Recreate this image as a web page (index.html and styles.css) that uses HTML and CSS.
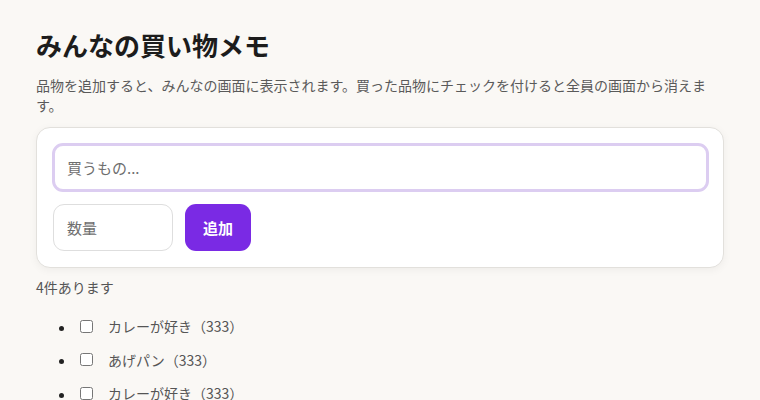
FILE: index.html
```html
<!DOCTYPE html>
<html lang="ja">
<head>
<meta charset="utf-8">
<title>みんなの買い物メモ</title>
<link rel="stylesheet" href="styles.css">
</head>
<body>
<main class="page">
  <h1 class="title">みんなの買い物メモ</h1>
  <p class="lead">品物を追加すると、みんなの画面に表示されます。買った品物にチェックを付けると全員の画面から消えます。</p>
  <form class="card">
    <input class="item-input" type="text" placeholder="買うもの...">
    <div class="row">
      <input class="qty-input" type="text" placeholder="数量">
      <button class="add-btn" type="button">追加</button>
    </div>
  </form>
  <p class="count">4件あります</p>
  <ul class="list">
    <li><label class="item"><input type="checkbox"><span>カレーが好き（333）</span></label></li>
    <li><label class="item"><input type="checkbox"><span>あげパン（333）</span></label></li>
    <li><label class="item"><input type="checkbox"><span>カレーが好き（333）</span></label></li>
    <li><label class="item"><input type="checkbox"><span>あげパン（333）</span></label></li>
  </ul>
</main>
</body>
</html>
```

FILE: styles.css
```css
html, body {
  margin: 0;
  background: #faf8f5;
  font-family: "Noto Sans CJK JP", "Noto Sans", sans-serif;
  color: #222;
}
.page {
  padding: 24px 36px;
}
.title {
  margin: 3px 0 0;
  font-size: 26px;
  line-height: 36px;
  font-weight: 700;
  color: #1c1c1c;
}
.lead {
  margin: 12px 0 0;
  font-size: 14px;
  line-height: 20px;
  color: #5a5a5a;
}
.card {
  margin-top: 12px;
  background: #fff;
  border: 1px solid #e2e0dc;
  border-radius: 14px;
  padding: 15px 14px 16px 15px;
  box-shadow: 0 2px 8px rgba(0,0,0,0.05);
  display: flex;
  flex-direction: column;
  gap: 12px;
}
.item-input {
  box-sizing: border-box;
  width: 100%;
  height: 49px;
  border: 3px solid #dccdf1;
  border-radius: 11px;
  padding: 0 12px;
  font: inherit;
  font-size: 15px;
  color: #333;
  outline: none;
  background: #fff;
}
.item-input::placeholder, .qty-input::placeholder {
  color: #6e6e6e;
}
.row {
  display: flex;
  gap: 12px;
  padding-left: 1px;
}
.qty-input {
  box-sizing: border-box;
  width: 120px;
  height: 47px;
  border: 1px solid #dedede;
  border-radius: 11px;
  padding: 0 13px;
  font: inherit;
  font-size: 15px;
  background: #fff;
}
.add-btn {
  height: 47px;
  width: 66px;
  border: none;
  border-radius: 11px;
  background: #7a2ae4;
  color: #fff;
  font: inherit;
  font-size: 15px;
  font-weight: 700;
}
.count {
  margin: 9px 0 0;
  font-size: 14px;
  line-height: 20px;
  color: #555;
}
.list {
  margin: 19px 0 0;
  padding-left: 40px;
  font-size: 14px;
  color: #555;
}
.list li {
  line-height: 20px;
  margin-bottom: 13px;
}
.list li::marker {
  color: #222;
}
.item {
  display: inline-flex;
  align-items: center;
  gap: 15px;
}
.item input {
  margin: 0 0 0 4px;
  width: 13px;
  height: 13px;
}
```
